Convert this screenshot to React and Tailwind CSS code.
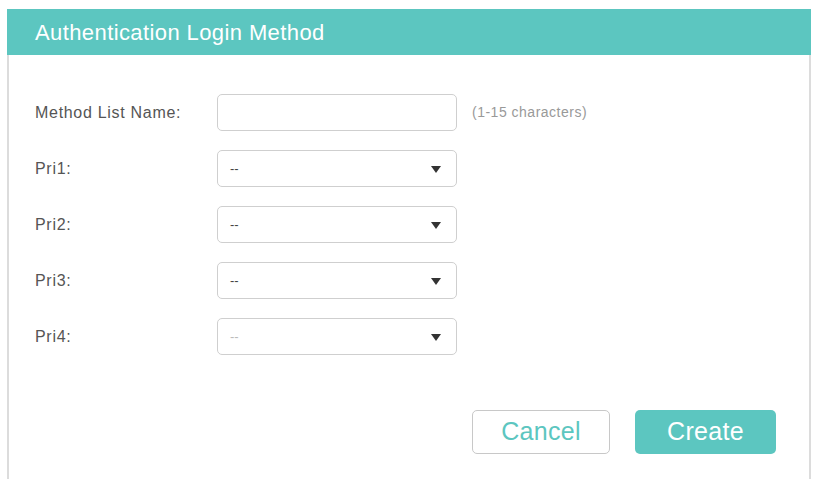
export default function App() {
  const Arrow = () => (
    <svg width="10" height="7" viewBox="0 0 10 7" className="absolute right-[15px] top-[15px]">
      <path d="M0 0 L10 0 L5 7 Z" fill="#333" />
    </svg>
  );
  const Select = ({ disabled }) => (
    <div className="relative w-[240px] h-[37px] border border-[#cfcfcf] rounded-[5px] bg-white flex items-center pl-[12px]">
      <span className={disabled ? "text-[13px] text-[#bbb]" : "text-[13px] text-[#444]"}>--</span>
      <Arrow />
    </div>
  );
  const rows = ["Pri1:", "Pri2:", "Pri3:", "Pri4:"];
  return (
    <div className="w-[817px] h-[479px] bg-white pt-[9px] pl-[7px] pr-[6px]" style={{ fontFamily: '"Liberation Sans", Arial, sans-serif' }}>
      <div className="h-[470px] border-l-2 border-r-2 border-[#dcdcdc] flex flex-col">
        <div className="h-[46px] bg-[#5cc6c0] flex items-center pl-[28px] -mx-[2px]">
          <span className="text-[22px] tracking-[0.4px] text-white">Authentication Login Method</span>
        </div>
        <div className="flex flex-col gap-[19px] pt-[39px] pl-[26px]">
          <div className="flex items-center h-[37px]">
            <div className="w-[182px] text-[16px] tracking-[0.7px] text-[#555]">Method List Name:</div>
            <div className="w-[240px] h-[37px] border border-[#cfcfcf] rounded-[5px] bg-white" />
            <div className="ml-[15px] text-[14px] tracking-[0.5px] text-[#999]">(1-15 characters)</div>
          </div>
          {rows.map((r, i) => (
            <div key={r} className="flex items-center h-[37px]">
              <div className="w-[182px] text-[16px] tracking-[0.7px] text-[#555]">{r}</div>
              <Select disabled={i === 3} />
            </div>
          ))}
        </div>
        <div className="flex justify-end gap-[25px] pr-[33px] mt-[55px]">
          <button className="w-[138px] h-[44px] border border-[#c8c8c8] rounded-[5px] bg-white text-[25px] tracking-[0.3px] text-[#5cc6c0]">Cancel</button>
          <button className="w-[141px] h-[44px] rounded-[5px] bg-[#5cc6c0] text-[25px] tracking-[0.3px] text-white">Create</button>
        </div>
      </div>
    </div>
  );
}
